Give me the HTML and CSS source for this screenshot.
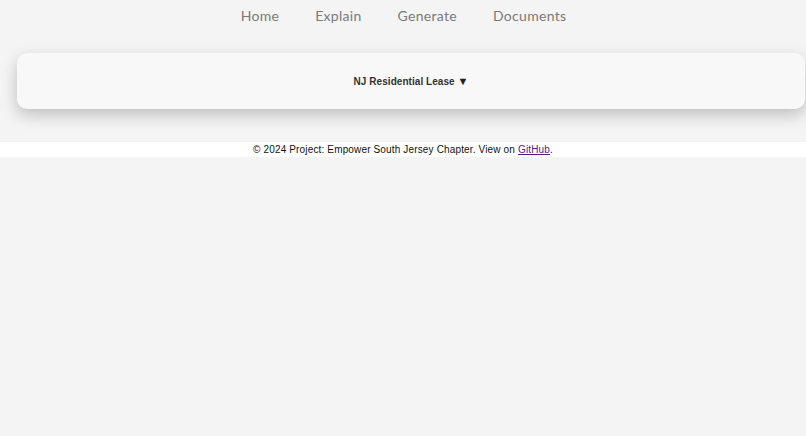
FILE: index.html
```html
<!DOCTYPE html>
<html>
<head>
<meta charset="utf-8">
<link rel="stylesheet" href="styles.css">
</head>
<body>
<nav class="nav">
  <a class="nav-link" href="#">Home</a>
  <a class="nav-link" href="#">Explain</a>
  <a class="nav-link" href="#">Generate</a>
  <a class="nav-link" href="#">Documents</a>
</nav>
<main class="main">
  <section class="card">
    <button class="select">NJ Residential Lease <span class="caret">▼</span></button>
  </section>
</main>
<footer class="footer">© 2024 Project: Empower South Jersey Chapter. View on <a class="footer-link" href="#">GitHub</a>.</footer>
</body>
</html>
```

FILE: styles.css
```css
html, body {
  margin: 0;
  padding: 0;
  background: #f4f4f4;
  overflow: hidden;
}
body {
  width: 806px;
  height: 436px;
}
.nav {
  display: flex;
  justify-content: center;
  gap: 36px;
  padding-top: 7px;
  height: 24px;
  padding-left: 1px;
}
.nav-link {
  font-family: "Lato", "Noto Sans", sans-serif;
  font-size: 14px;
  font-weight: 400;
  letter-spacing: 0.3px;
  color: #7a7a7a;
  text-decoration: none;
  line-height: 18px;
}
.main {
  padding-top: 22px;
  padding-left: 17px;
}
.card {
  width: 788px;
  height: 56px;
  box-sizing: border-box;
  background: #f8f8f8;
  border-radius: 10px;
  box-shadow: 0 6px 16px rgba(0, 0, 0, 0.22);
  display: flex;
  align-items: center;
  justify-content: center;
}
.select {
  background: none;
  border: none;
  padding: 0;
  font-family: "Liberation Sans", Arial, sans-serif;
  font-weight: bold;
  font-size: 10px;
  letter-spacing: 0.05px;
  color: #333;
  cursor: pointer;
}
.caret {
  font-size: 11px;
  color: #222;
}
.footer {
  margin-top: 33px;
  background: #fff;
  height: 15px;
  line-height: 15px;
  text-align: center;
  font-family: "Liberation Sans", Arial, sans-serif;
  font-size: 10px;
  letter-spacing: 0.15px;
  color: #111;
}
.footer-link {
  color: #551a8b;
}
```
